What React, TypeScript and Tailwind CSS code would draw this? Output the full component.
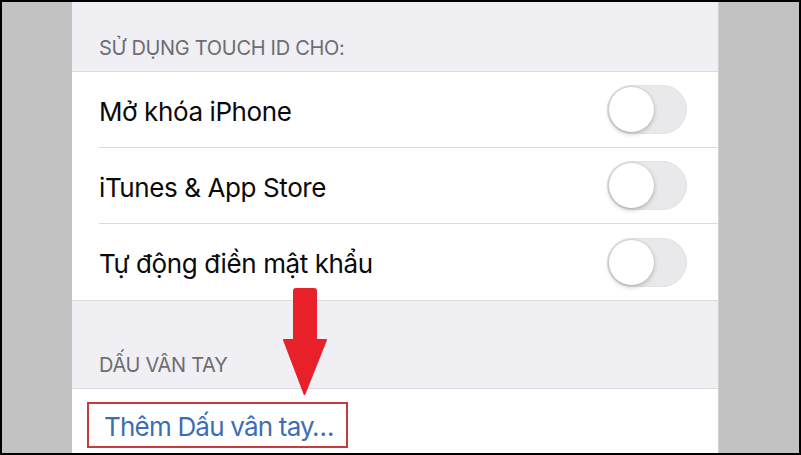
import React from "react";

function Toggle() {
  return (
    <div className="relative w-[80px] h-[49px] rounded-full bg-[#e9e9eb] border border-[#e2e2e4] shrink-0">
      <div className="absolute left-[1px] top-[1px] w-[45px] h-[45px] rounded-full bg-white shadow-[0_2px_5px_rgba(0,0,0,0.22),0_0_0_1px_rgba(0,0,0,0.05)]" />
    </div>
  );
}

function Row({ label, last }: { label: string; last?: boolean }) {
  return (
    <div className="h-[76px] pl-[27px]">
      <div
        className={
          "h-full flex items-center justify-between pr-[31px] " +
          (last ? "" : "border-b border-[#dcdce0]")
        }
      >
        <span className="text-[26px] pt-[3px] text-[#0a0a0a] tracking-[-0.4px]">{label}</span>
        <Toggle />
      </div>
    </div>
  );
}

export default function App() {
  return (
    <div
      className="w-[801px] h-[455px] border-2 border-black bg-[#c2c2c2] flex overflow-hidden"
      style={{ fontFamily: "Inter, 'Noto Sans', sans-serif" }}
    >
      <div className="w-[70px] shrink-0" />
      <div className="relative w-[646px] shrink-0 bg-[#efeff4] flex flex-col">
        <div className="h-[69px] flex items-end pb-[11px] pl-[27px] text-[20px] leading-[24px] tracking-[-0.3px] text-[#6d6d72]">
          SỬ DỤNG TOUCH ID CHO:
        </div>
        <div className="bg-white border-y border-[#dcdce0]">
          <Row label="Mở khóa iPhone" />
          <Row label="iTunes & App Store" />
          <Row label="Tự động điền mật khẩu" last />
        </div>
        <div className="h-[87px] flex items-end pb-[11px] pl-[27px] text-[20px] leading-[24px] tracking-[-0.3px] text-[#6d6d72]">
          DẤU VÂN TAY
        </div>
        <div className="flex-1 bg-white border-t border-[#dcdce0] pl-[15px] pt-[13px]">
          <div className="inline-flex items-center h-[46px] border-2 border-[#c93a40] pl-[15px] pr-[12px] pt-[2px] text-[26px] text-[#3c6eb4] tracking-[-0.8px]">
            Thêm Dấu vân tay…
          </div>
        </div>
        {/* red pointer arrow */}
        <svg
          className="absolute left-[211px] top-[286px]"
          width="46"
          height="108"
          viewBox="0 0 46 108"
        >
          <rect x="10" y="0" width="24" height="56" rx="3" fill="#e8202a" />
          <path d="M1 52 L43 52 L21.5 106 Z" fill="#e8202a" stroke="#e8202a" strokeWidth="2" strokeLinejoin="round" />
        </svg>
      </div>
      <div className="flex-1 border-l border-[#d0d0d0]" />
    </div>
  );
}
